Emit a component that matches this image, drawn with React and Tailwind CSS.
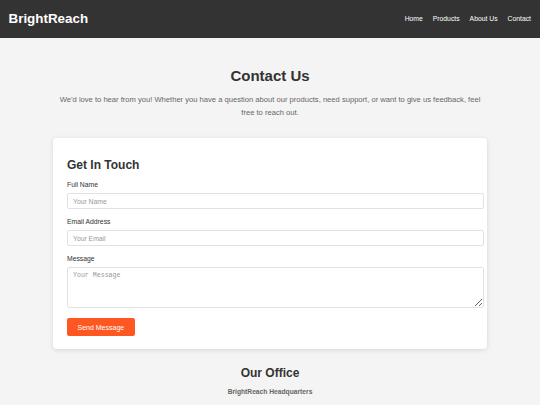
export default function App() {
  return (
    <div className="min-h-screen bg-[#f4f4f4] font-['Liberation_Sans',Arial,sans-serif] text-[#333]">
      {/* Header */}
      <header className="h-[38px] bg-[#333] flex items-center justify-between pl-[8.5px] pr-[9px]">
        <div className="text-white font-bold text-[13.4px] leading-none">BrightReach</div>
        <nav className="flex gap-[10px] text-white text-[6.8px] leading-none">
          <a href="#">Home</a>
          <a href="#">Products</a>
          <a href="#">About Us</a>
          <a href="#">Contact</a>
        </nav>
      </header>

      <main className="flex flex-col items-center">
        {/* Intro */}
        <h1 className="mt-[29px] text-[15px] leading-[18px] font-bold text-[#333]">Contact Us</h1>
        <p className="mt-[9px] w-[434px] text-center text-[7.6px] leading-[12.8px] text-[#666]">
          We’d love to hear from you! Whether you have a question about our products, need support, or want to give us feedback, feel free to reach out.
        </p>

        {/* Form card */}
        <div className="mt-[18px] w-[434px] bg-white rounded-[4px] shadow-[0_1px_5px_rgba(0,0,0,0.12)] pl-[14px] pt-[20.5px] pb-[12.5px]">
          <h2 className="text-[12px] leading-[14.4px] font-bold text-[#333]">Get In Touch</h2>

          <label className="block mt-[8px] text-[6.8px] leading-[8px] text-[#333]">Full Name</label>
          <input
            placeholder="Your Name"
            className="block mt-[4.4px] w-[417px] h-[16.6px] px-[5px] border border-[#e2e2e2] rounded-[2px] text-[6.8px] placeholder:text-[#999] outline-none"
          />

          <label className="block mt-[8.4px] text-[6.8px] leading-[8px] text-[#333]">Email Address</label>
          <input
            placeholder="Your Email"
            className="block mt-[4.3px] w-[417px] h-[16.3px] px-[5px] border border-[#e2e2e2] rounded-[2px] text-[6.8px] placeholder:text-[#999] outline-none"
          />

          <label className="block mt-[8.4px] text-[6.8px] leading-[8px] text-[#333]">Message</label>
          <textarea
            placeholder="Your Message"
            className="block mt-[4.6px] w-[417px] h-[41px] px-[5px] py-[4px] border border-[#e2e2e2] rounded-[2px] text-[6.6px] leading-[8px] font-['Liberation_Mono',monospace] placeholder:text-[#999] outline-none"
          />

          <button className="mt-[10px] w-[67.7px] h-[17.4px] bg-[#ff5722] text-white text-[7px] leading-none rounded-[2px]">
            Send Message
          </button>
        </div>

        {/* Office */}
        <h2 className="mt-[16.5px] text-[12px] leading-[14.4px] font-bold text-[#333]">Our Office</h2>
        <p className="mt-[7.5px] text-[6.7px] leading-[8px] font-bold text-[#666]">BrightReach Headquarters</p>
      </main>
    </div>
  );
}
